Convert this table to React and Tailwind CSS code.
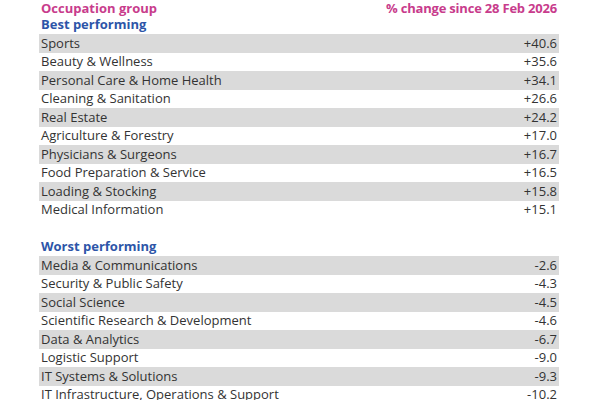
const best = [
  ["Sports", "+40.6"],
  ["Beauty & Wellness", "+35.6"],
  ["Personal Care & Home Health", "+34.1"],
  ["Cleaning & Sanitation", "+26.6"],
  ["Real Estate", "+24.2"],
  ["Agriculture & Forestry", "+17.0"],
  ["Physicians & Surgeons", "+16.7"],
  ["Food Preparation & Service", "+16.5"],
  ["Loading & Stocking", "+15.8"],
  ["Medical Information", "+15.1"],
];

const worst = [
  ["Media & Communications", "-2.6"],
  ["Security & Public Safety", "-4.3"],
  ["Social Science", "-4.5"],
  ["Scientific Research & Development", "-4.6"],
  ["Data & Analytics", "-6.7"],
  ["Logistic Support", "-9.0"],
  ["IT Systems & Solutions", "-9.3"],
  ["IT Infrastructure, Operations & Support", "-10.2"],
];

const Rows = ({ items }) =>
  items.map(([name, val], i) => (
    <div
      key={name}
      className={`flex h-[18.5px] items-center justify-between px-[2px] ${
        i % 2 === 0 ? "bg-[#dadada]" : "bg-white"
      }`}
    >
      <span>{name}</span>
      <span>{val}</span>
    </div>
  ));

export default function App() {
  return (
    <div
      className="h-[400px] w-[600px] overflow-hidden bg-white text-[13px] text-[#333333]"
      style={{ fontFamily: '"Open Sans", "Noto Sans", sans-serif' }}
    >
      <div className="mx-[39px] w-[520px]">
        {/* Header */}
        <div className="flex h-[15.5px] items-center justify-between px-[2px] pt-[1px] font-bold text-[#c83c8c]">
          <span>Occupation group</span>
          <span className="tracking-[-0.2px]">% change since 28 Feb 2026</span>
        </div>

        {/* Best */}
        <div className="flex h-[18.5px] items-center px-[2px] font-bold text-[#2d55a8]">
          Best performing
        </div>
        <Rows items={best} />

        <div className="h-[18.5px]"></div>

        {/* Worst */}
        <div className="flex h-[18.5px] items-center px-[2px] font-bold text-[#2d55a8]">
          Worst performing
        </div>
        <Rows items={worst} />
      </div>
    </div>
  );
}
